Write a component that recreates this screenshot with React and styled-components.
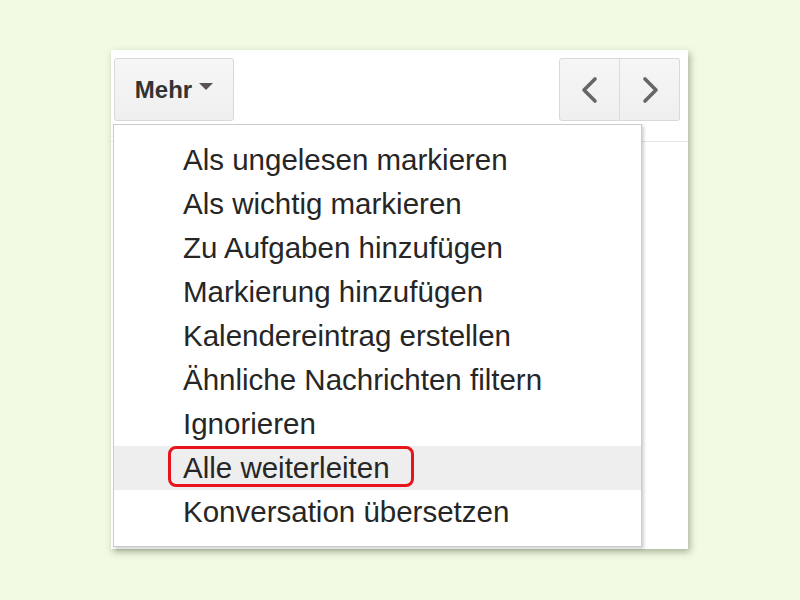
import React from 'react';
import styled, { createGlobalStyle } from 'styled-components';

const GlobalStyle = createGlobalStyle`
  html, body {
    margin: 0;
    padding: 0;
    background: #f2fae4;
    font-family: "Liberation Sans", Arial, sans-serif;
  }
`;

const Stage = styled.div`
  width: 800px;
  height: 600px;
  padding: 50px 0 0 111px;
  box-sizing: border-box;
`;

const Panel = styled.section`
  position: relative;
  width: 577px;
  height: 499px;
  background: #fff;
  box-shadow: 2px 3px 7px rgba(70, 90, 50, 0.45);
`;

const Toolbar = styled.div`
  display: flex;
  justify-content: space-between;
  align-items: flex-start;
  height: 92px;
  padding: 8px 8px 0 3px;
  box-sizing: border-box;
  border-bottom: 1px solid #e6e6e6;
`;

const GreyButton = styled.button`
  display: flex;
  align-items: center;
  justify-content: center;
  height: 63px;
  padding: 0;
  border: 1px solid #d9d9d9;
  border-radius: 3px;
  background: linear-gradient(#f6f6f6, #efefef);
  color: #333;
  font-family: inherit;
`;

const MoreButton = styled(GreyButton)`
  width: 120px;
  gap: 7px;
  font-size: 24px;
  font-weight: bold;
`;

const Caret = styled.span`
  width: 0;
  height: 0;
  margin-top: -6px;
  border-left: 7px solid transparent;
  border-right: 7px solid transparent;
  border-top: 7px solid #555;
`;

const NavGroup = styled.div`
  display: flex;
`;

const NavButton = styled(GreyButton)`
  width: 61px;
  border-radius: ${(p) => (p.$side === 'left' ? '3px 0 0 3px' : '0 3px 3px 0')};
  border-left: ${(p) => (p.$side === 'right' ? '1px solid #dcdcdc' : '1px solid #d9d9d9')};
  margin-left: ${(p) => (p.$side === 'right' ? '-1px' : '0')};
`;

const Menu = styled.ul`
  position: absolute;
  top: 74px;
  left: 2px;
  width: 529px;
  height: 423px;
  margin: 0;
  padding: 13px 0 0;
  box-sizing: border-box;
  list-style: none;
  background: #fff;
  border: 1px solid #cbcbcb;
  box-shadow: 2px 2px 3px rgba(0, 0, 0, 0.18);
`;

const Item = styled.li`
  position: relative;
  height: 44px;
  line-height: 44px;
  padding-left: 69px;
  font-size: 29.5px;
  color: #262626;
  background: ${(p) => (p.$active ? '#eeeeee' : 'transparent')};
  white-space: nowrap;
`;

const Highlight = styled.span`
  position: absolute;
  top: 0;
  left: 54px;
  width: 246px;
  height: 41px;
  box-sizing: border-box;
  border: 3px solid #e8141b;
  border-radius: 8px;
`;

const Chevron = ({ dir }) => (
  <svg width="22" height="28" viewBox="0 0 22 28">
    <path
      d={dir === 'left' ? 'M16 3 L5 14 L16 25' : 'M6 3 L17 14 L6 25'}
      fill="none"
      stroke="#666"
      strokeWidth="3.6"
      strokeLinecap="round"
      strokeLinejoin="round"
    />
  </svg>
);

const items = [
  'Als ungelesen markieren',
  'Als wichtig markieren',
  'Zu Aufgaben hinzufügen',
  'Markierung hinzufügen',
  'Kalendereintrag erstellen',
  'Ähnliche Nachrichten filtern',
  'Ignorieren',
  'Alle weiterleiten',
  'Konversation übersetzen',
];

const App = () => (
  <>
    <GlobalStyle />
    <Stage>
      <Panel>
        <Toolbar>
          <MoreButton>
            Mehr
            <Caret />
          </MoreButton>
          <NavGroup>
            <NavButton $side="left"><Chevron dir="left" /></NavButton>
            <NavButton $side="right"><Chevron dir="right" /></NavButton>
          </NavGroup>
        </Toolbar>
        <Menu>
          {items.map((label) => (
            <Item key={label} $active={label === 'Alle weiterleiten'}>
              {label}
              {label === 'Alle weiterleiten' && <Highlight />}
            </Item>
          ))}
        </Menu>
      </Panel>
    </Stage>
  </>
);

export default App;
